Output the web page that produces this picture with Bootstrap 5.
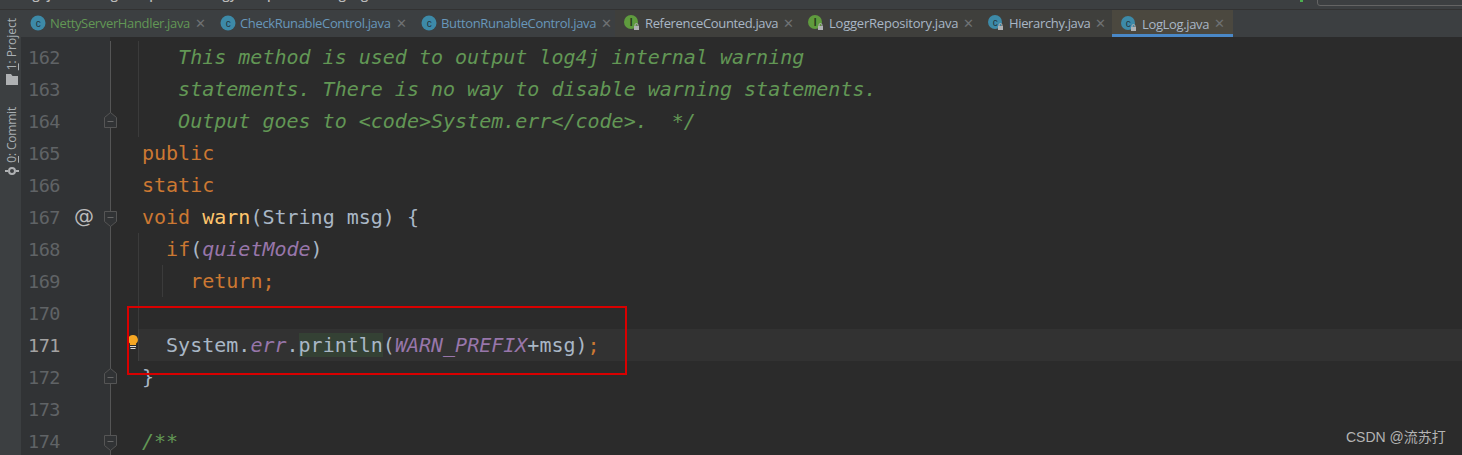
<!DOCTYPE html>
<html lang="en">
<head>
<meta charset="utf-8">
<title>LogLog.java</title>
<link href="https://cdn.jsdelivr.net/npm/bootstrap@5.3.0/dist/css/bootstrap.min.css" rel="stylesheet">
<style>
html,body{margin:0;height:455px;overflow:hidden;background:#2b2b2b}
.ide{width:1462px;height:455px;position:relative;overflow:hidden;background:#2b2b2b}
.crumbs{height:10px;background:#3c3f41;border-bottom:1px solid #323232;overflow:hidden;position:relative;flex:none}
.crumb-text{font:600 13px "Open Sans",sans-serif;color:#bbb;margin-top:-15px;margin-left:21px;line-height:18px;white-space:nowrap;word-spacing:6px}
.crumb-dot{display:inline-block;width:12px;height:12px;border-radius:50%;background:#3d8aa8;vertical-align:-1px}
.crumb-red{display:inline-block;width:10px;height:12px;background:#b0545a;vertical-align:-1px}
.searchbox{position:absolute;left:1317px;top:-14px;width:160px;height:20px;border:1px solid #646464;border-radius:3px}
.greenpip{position:absolute;left:1300px;top:0;width:3px;height:2px;background:#4caf50}
.tabstrip{height:27px;background:#3c3f41;flex:none;margin-left:21px;font:13px "Open Sans",sans-serif;letter-spacing:-.35px}
.ftab{height:27px;display:flex;align-items:center;flex:none;padding-bottom:1px;padding-left:8px;white-space:nowrap}
.ftab.lib{background:#3f3f3c}
.ftab.cur{background:#4b483f;box-shadow:inset 0 -3px 0 #4a88c7;padding-bottom:0}
.tabname{color:#a9b7c6}
.tabname.g{color:#629755}
.tabname.b{color:#6897bb}
.tabx{color:#6e7173;font-size:13px;line-height:1;letter-spacing:0;margin-left:5px}
.ticon{flex:none;display:block;margin-right:4px}
.w1{width:191px;padding-left:9px}
.w2{width:201px}
.w3{width:202px}
.w4{width:184px}
.w5{width:180px;letter-spacing:-.22px}
.w6{width:133px}
.w7{width:121px}
.sidebar{position:absolute;left:0;top:10px;bottom:0;width:21px;background:#3c3f41;font:12px "Open Sans",sans-serif;color:#a9afb3;padding-left:2px}
.vtext{writing-mode:vertical-rl;transform:rotate(180deg);white-space:nowrap;line-height:21px}
.vt1{margin-top:8px}
.vt2{margin-top:22px;letter-spacing:-.2px}
.foldericon{margin-top:4px}
.commiticon{margin-top:3px}
.main{flex:1;min-height:0;margin-left:21px;padding-top:4px;background:linear-gradient(90deg,#313335 0,#313335 89px,#2b2b2b 89px);font:20px/32px "DejaVu Sans Mono","Liberation Mono",monospace}
.ln{height:32px;display:flex;position:relative;white-space:pre}
.num{flex:none;width:82px;padding-left:7px;box-sizing:content-box;color:#606366;font-size:18.5px;line-height:33px;letter-spacing:-.5px;border-right:1px solid #555}
.num.on{color:#a4a3a3}
.at{position:absolute;left:53px;top:-1px;color:#bbb;font:20px/32px "DejaVu Sans",sans-serif;letter-spacing:0}
.src{flex:1;padding-left:31px;color:#a9b7c6}
.guide{background:linear-gradient(90deg,transparent 27px,#3b3b3b 27px,#3b3b3b 28px,transparent 28px)}
.guide2{background:linear-gradient(90deg,transparent 27px,#3b3b3b 27px,#3b3b3b 28px,transparent 28px,transparent 51px,#3b3b3b 51px,#3b3b3b 52px,transparent 52px)}
.act .src{background:linear-gradient(90deg,transparent 27px,#3f3f3f 27px,#3f3f3f 28px,#323232 28px)}
.cm{color:#629755;font-style:italic}
.kw{color:#cc7832}
.fld{color:#9876aa;font-style:italic}
.fn{color:#ffc66d}
.hit{background:#344134}
.fold{position:absolute;left:83px;display:block}
.fold.up{top:7px}
.fold.dn{top:10px}
.bulb{position:absolute;left:107px;top:6px;display:block}
.redbox{position:absolute;left:127px;top:306px;width:500px;height:69px;border:2px solid #d90000}
.wmark{position:absolute;left:1346px;top:427px;font:14px "Liberation Sans","Noto Sans CJK SC",sans-serif;color:#b4b4b4;line-height:20px}
</style>
</head>
<body>
<div class="ide d-flex flex-column">
  <div class="crumbs">
    <div class="crumb-text">log4j-1.2 / org / apache / logy / spi / <span class="crumb-dot"></span> LogLog / <span class="crumb-red"></span></div>
    <div class="greenpip"></div>
    <div class="searchbox"></div>
  </div>
  <div class="tabstrip d-flex">
    <div class="ftab w1"><svg class="ticon" width="16" height="16" viewBox="0 0 16 16"><circle cx="8" cy="8" r="7.5" fill="#3d8aa8"/><text x="8" y="11.500" font-size="10" text-anchor="middle" fill="#23333b" font-family="Liberation Sans">c</text></svg><span class="tabname g">NettyServerHandler.java</span><span class="tabx">✕</span></div>
    <div class="ftab w2"><svg class="ticon" width="16" height="16" viewBox="0 0 16 16"><circle cx="8" cy="8" r="7.5" fill="#3d8aa8"/><text x="8" y="11.500" font-size="10" text-anchor="middle" fill="#23333b" font-family="Liberation Sans">c</text></svg><span class="tabname b">CheckRunableControl.java</span><span class="tabx">✕</span></div>
    <div class="ftab w3"><svg class="ticon" width="16" height="16" viewBox="0 0 16 16"><circle cx="8" cy="8" r="7.5" fill="#3d8aa8"/><text x="8" y="11.500" font-size="10" text-anchor="middle" fill="#23333b" font-family="Liberation Sans">c</text></svg><span class="tabname b">ButtonRunableControl.java</span><span class="tabx">✕</span></div>
    <div class="ftab lib w4"><svg class="ticon" width="18" height="18" viewBox="0 0 18 18"><circle cx="8" cy="8" r="7" fill="#5f9b3e"/><text x="8" y="11.500" font-size="10" text-anchor="middle" fill="#26351c" font-family="Liberation Sans" font-weight="700">I</text><rect x="11" y="12" width="5" height="4" fill="#afb1b3"/><path d="M12 12v-1a1.500 1.500 0 0 1 3 0v1" fill="none" stroke="#afb1b3"/></svg><span class="tabname">ReferenceCounted.java</span><span class="tabx">✕</span></div>
    <div class="ftab lib w5"><svg class="ticon" width="18" height="18" viewBox="0 0 18 18"><circle cx="8" cy="8" r="7" fill="#5f9b3e"/><text x="8" y="11.500" font-size="10" text-anchor="middle" fill="#26351c" font-family="Liberation Sans" font-weight="700">I</text><rect x="11" y="12" width="5" height="4" fill="#afb1b3"/><path d="M12 12v-1a1.500 1.500 0 0 1 3 0v1" fill="none" stroke="#afb1b3"/></svg><span class="tabname">LoggerRepository.java</span><span class="tabx">✕</span></div>
    <div class="ftab lib w6"><svg class="ticon" width="18" height="18" viewBox="0 0 18 18"><circle cx="8" cy="8" r="7" fill="#3d8aa8"/><text x="8" y="11.500" font-size="10" text-anchor="middle" fill="#23333b" font-family="Liberation Sans">c</text><rect x="11" y="12" width="5" height="4" fill="#afb1b3"/><path d="M12 12v-1a1.500 1.500 0 0 1 3 0v1" fill="none" stroke="#afb1b3"/></svg><span class="tabname">Hierarchy.java</span><span class="tabx">✕</span></div>
    <div class="ftab cur w7"><svg class="ticon" width="18" height="18" viewBox="0 0 18 18"><circle cx="8" cy="8" r="7" fill="#3d8aa8"/><text x="8" y="11.500" font-size="10" text-anchor="middle" fill="#23333b" font-family="Liberation Sans">c</text><rect x="11" y="12" width="5" height="4" fill="#afb1b3"/><path d="M12 12v-1a1.500 1.500 0 0 1 3 0v1" fill="none" stroke="#afb1b3"/></svg><span class="tabname">LogLog.java</span><span class="tabx">✕</span></div>
  </div>
  <div class="main">
    <div class="ln"><div class="num">162</div><div class="src guide"><span class="cm">   This method is used to output log4j internal warning</span></div></div>
    <div class="ln"><div class="num">163</div><div class="src guide"><span class="cm">   statements. There is no way to disable warning statements.</span></div></div>
    <div class="ln"><div class="num">164</div><div class="src guide"><span class="cm">   Output goes to &lt;code&gt;System.err&lt;/code&gt;.  */</span></div>
      <svg class="fold up" width="13" height="16" viewBox="0 0 13 16"><path d="M.5 15.500V5.500L6.500.5l6 5v10z" fill="#313335" stroke="#555"/><path d="M3.500 9.500h6" stroke="#666"/></svg></div>
    <div class="ln"><div class="num">165</div><div class="src"><span class="kw">public</span></div></div>
    <div class="ln"><div class="num">166</div><div class="src"><span class="kw">static</span></div></div>
    <div class="ln"><div class="num">167<span class="at">@</span></div><div class="src"><span class="kw">void</span> <span class="fn">warn</span>(String msg) {</div>
      <svg class="fold dn" width="13" height="16" viewBox="0 0 13 16"><path d="M.5.5v10l6 5 6-5V.5z" fill="#313335" stroke="#555"/><path d="M3.500 6.500h6" stroke="#666"/></svg></div>
    <div class="ln"><div class="num">168</div><div class="src guide">  <span class="kw">if</span>(<span class="fld">quietMode</span>)</div></div>
    <div class="ln"><div class="num">169</div><div class="src guide2">    <span class="kw">return;</span></div></div>
    <div class="ln"><div class="num">170</div><div class="src guide"></div></div>
    <div class="ln act"><div class="num on">171</div><div class="src">  System.<span class="fld">err</span>.<span class="hit">println</span>(<span class="fld">WARN_PREFIX</span>+msg)<span class="kw">;</span></div>
      <svg class="bulb" width="10" height="15" viewBox="0 0 10 15"><path d="M5 0a4.800 4.800 0 0 1 3 8.600V10H2V8.600A4.800 4.800 0 0 1 5 0z" fill="#f5a623"/><path d="M2 11.500h6M2.500 13.500h5" stroke="#d8d8d8"/></svg></div>
    <div class="ln"><div class="num">172</div><div class="src">}</div>
      <svg class="fold up" width="13" height="16" viewBox="0 0 13 16"><path d="M.5 15.500V5.500L6.500.5l6 5v10z" fill="#313335" stroke="#555"/><path d="M3.500 9.500h6" stroke="#666"/></svg></div>
    <div class="ln"><div class="num">173</div><div class="src"></div></div>
    <div class="ln"><div class="num">174</div><div class="src"><span class="cm">/**</span></div>
      <svg class="fold dn" width="13" height="16" viewBox="0 0 13 16"><path d="M.5.5v10l6 5 6-5V.5z" fill="#313335" stroke="#555"/><path d="M3.500 6.500h6" stroke="#666"/></svg></div>
  </div>
  <div class="sidebar d-flex flex-column align-items-center">
    <div class="vtext vt1"><u>1</u>: Project</div>
    <svg class="foldericon" width="12" height="11" viewBox="0 0 12 11"><path d="M0 0h5l1.500 2H12v9H0z" fill="#afb1b3"/></svg>
    <div class="vtext vt2"><u>0</u>: Commit</div>
    <svg class="commiticon" width="14" height="10" viewBox="0 0 14 10"><circle cx="7" cy="5" r="3" fill="none" stroke="#afb1b3" stroke-width="2"/><path d="M0 5h3M11 5h3" stroke="#afb1b3" stroke-width="2"/></svg>
  </div>
  <div class="redbox"></div>
  <div class="wmark">CSDN @流苏打</div>
</div>
<script src="https://cdn.jsdelivr.net/npm/bootstrap@5.3.0/dist/js/bootstrap.bundle.min.js"></script>
</body>
</html>
